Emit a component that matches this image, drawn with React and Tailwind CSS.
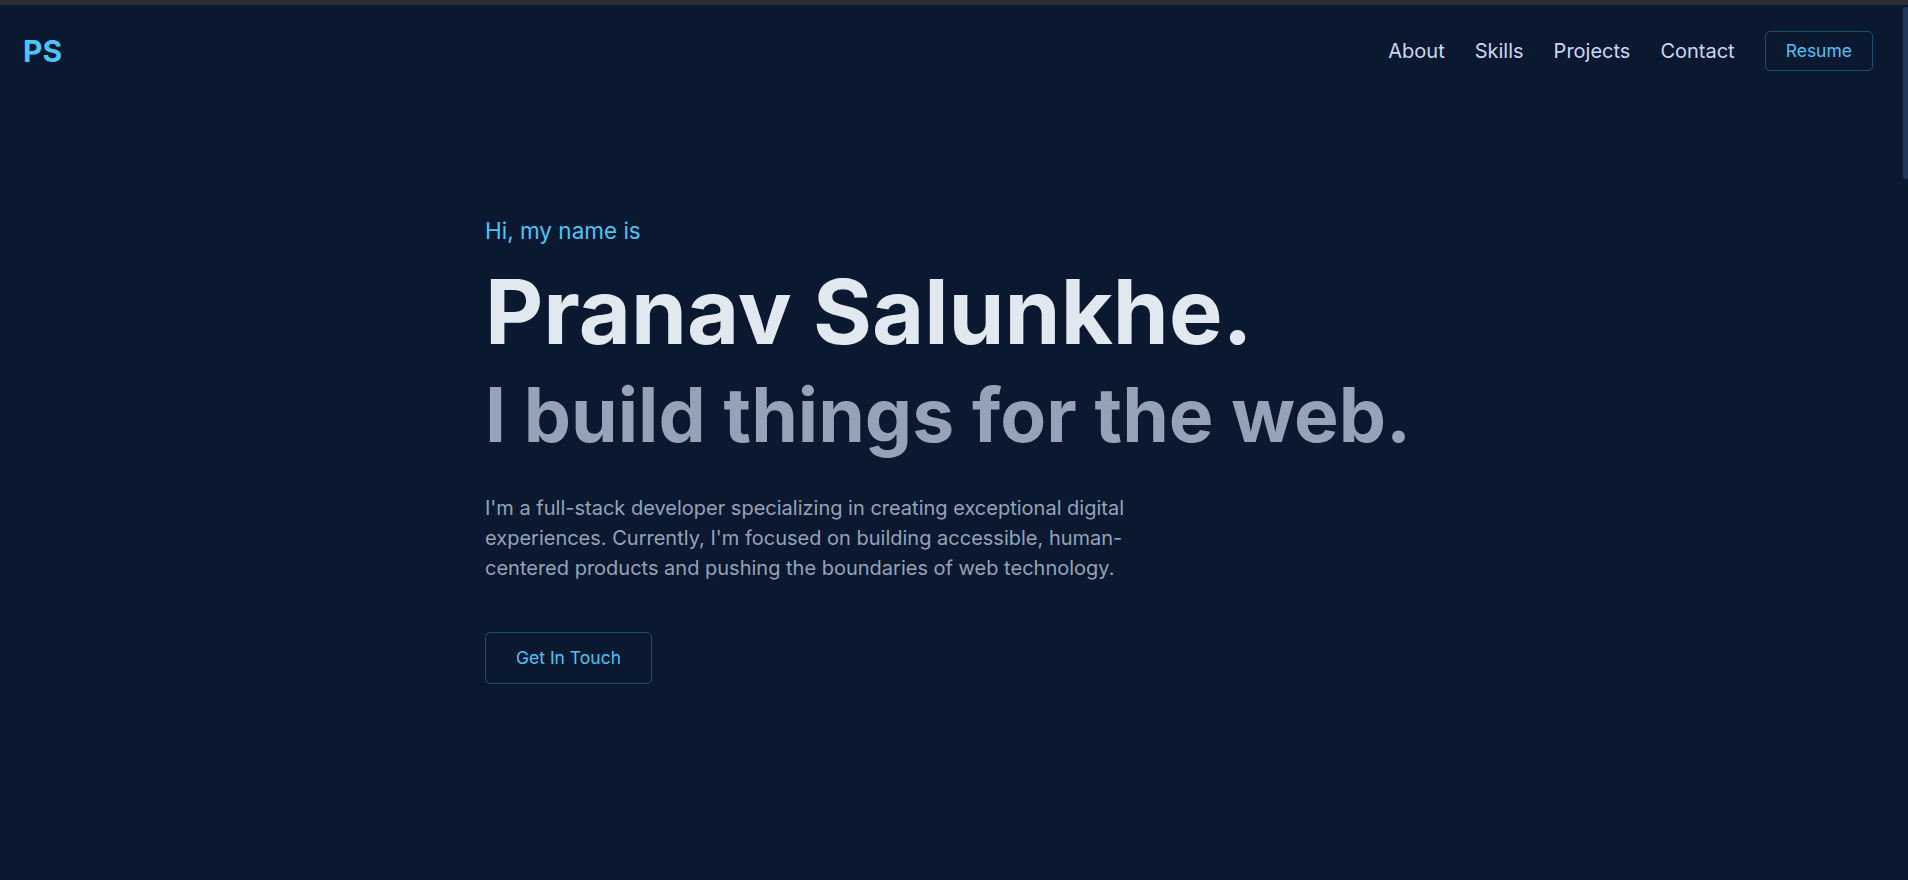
import React from 'react'

export default function App() {
    const links = ['About', 'Skills', 'Projects', 'Contact']

    return (
        <div className="h-[880px] overflow-hidden flex flex-col bg-[#0a192f] font-['Inter','Liberation_Sans',sans-serif]">
            {/* window strip */}
            <div className="h-[5px] bg-[#2d2c34] shrink-0" />

            <div className="flex flex-1 min-h-0">
                <main className="flex-1 flex flex-col">
                    {/* Header */}
                    <header className="h-[92px] flex items-center justify-between pl-[23px] pr-[23px]">
                        <a href="#" className="text-[30px] leading-[38px] font-bold text-[#4fc3f7]">PS</a>
                        <nav className="flex items-center gap-[30px]">
                            {links.map((l) => (
                                <a key={l} href="#" className="text-[20px] leading-[30px] text-[#ccd6f6]">{l}</a>
                            ))}
                            <a
                                href="#"
                                className="h-[40px] px-[20px] flex items-center border border-[#4fc3f7]/30 rounded-[5px] text-[17.5px] text-[#4fc3f7]"
                            >
                                Resume
                            </a>
                        </nav>
                    </header>

                    {/* Hero */}
                    <section className="pl-[485px] pt-[116px]">
                        <p className="text-[22.5px] leading-[35px] text-[#4fc3f7] mb-[19px]">Hi, my name is</p>
                        <h1 className="text-[90px] leading-none font-bold text-[#e2e8f0]">Pranav Salunkhe.</h1>
                        <h2 className="mt-[20px] text-[75px] leading-none font-bold text-[#94a3b8]">I build things for the web.</h2>
                        <p className="mt-[41px] max-w-[680px] text-[20px] leading-[30px] text-[#94a3b8]">
                            I'm a full-stack developer specializing in creating exceptional digital experiences. Currently, I'm focused on building accessible, human-centered products and pushing the boundaries of web technology.
                        </p>
                        <button className="mt-[49px] h-[52px] px-[30px] border border-[#4fc3f7]/30 rounded-[5px] text-[17.5px] text-[#4fc3f7]">
                            Get In Touch
                        </button>
                    </section>
                </main>

                {/* scrollbar */}
                <aside className="w-[12px] shrink-0 flex justify-end">
                    <div className="mt-[2px] w-[5px] h-[172px] rounded-l-[3px] bg-[#22355a]" />
                </aside>
            </div>
        </div>
    )
}
